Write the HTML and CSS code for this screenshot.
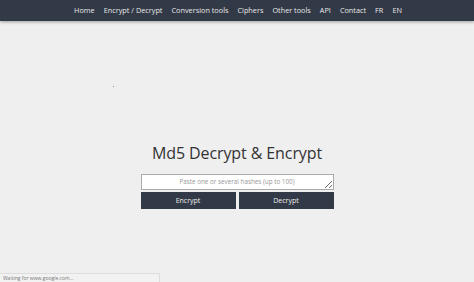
FILE: index.html
```html
<!DOCTYPE html>
<html>
<head>
<meta charset="utf-8">
<link rel="stylesheet" href="styles.css">
</head>
<body>
<nav class="topnav">
  <a>Home</a>
  <a>Encrypt / Decrypt</a>
  <a>Conversion tools</a>
  <a>Ciphers</a>
  <a>Other tools</a>
  <a>API</a>
  <a>Contact</a>
  <a>FR</a>
  <a>EN</a>
</nav>
<main class="content">
  <span class="dot"></span>
  <h1 class="title">Md5 Decrypt &amp; Encrypt</h1>
  <form class="form">
    <textarea class="hashes" placeholder="Paste one or several hashes (up to 100)"></textarea>
    <div class="buttons">
      <button type="button" class="btn">Encrypt</button>
      <button type="button" class="btn">Decrypt</button>
    </div>
  </form>
</main>
<div class="status">Waiting for www.google.com...</div>
</body>
</html>
```
FILE: styles.css
```css
html, body {
  margin: 0;
  padding: 0;
  height: 100%;
}
body {
  background: #efefef;
  font-family: "Open Sans", "DejaVu Sans", sans-serif;
  overflow: hidden;
}
.topnav {
  height: 21px;
  background: #333a47;
  box-shadow: 0 1px 3px rgba(0,0,0,0.35);
  display: flex;
  justify-content: center;
  align-items: center;
  gap: 9px;
  padding-left: 2px;
}
.topnav a {
  color: #e8e8e8;
  font-size: 7.3px;
  line-height: 21px;
}
.content {
  display: flex;
  flex-direction: column;
  align-items: center;
  height: 252px;
}
.dot {
  align-self: flex-start;
  width: 1px;
  height: 1px;
  background: #888;
  margin: 65px 0 0 113px;
}
.title {
  margin: 55px 0 0 0;
  font-weight: normal;
  font-size: 16px;
  line-height: 22px;
  color: #333;
  letter-spacing: -0.1px;
}
.form {
  margin-top: 10px;
  width: 193px;
  display: flex;
  flex-direction: column;
  gap: 2px;
}
.hashes {
  box-sizing: border-box;
  width: 193px;
  height: 16px;
  margin: 0;
  padding: 2px 4px;
  border: 1px solid #aaa;
  background: #fff;
  font-family: inherit;
  font-size: 6.3px;
  text-align: center;
  resize: vertical;
  overflow: hidden;
  display: block;
}
.hashes::placeholder {
  color: #999;
}
.buttons {
  display: flex;
  gap: 3px;
}
.btn {
  flex: 1;
  height: 17px;
  border: 0;
  margin: 0;
  padding: 0;
  background: #333a47;
  color: #eee;
  font-family: inherit;
  font-size: 7px;
}
.status {
  position: fixed;
  left: 0;
  bottom: 0;
  width: 156px;
  height: 8px;
  background: #f2f2f2;
  border-top: 1px solid #ddd;
  border-right: 1px solid #ddd;
  color: #777;
  font-size: 5px;
  line-height: 8px;
  padding-left: 3px;
}
```
